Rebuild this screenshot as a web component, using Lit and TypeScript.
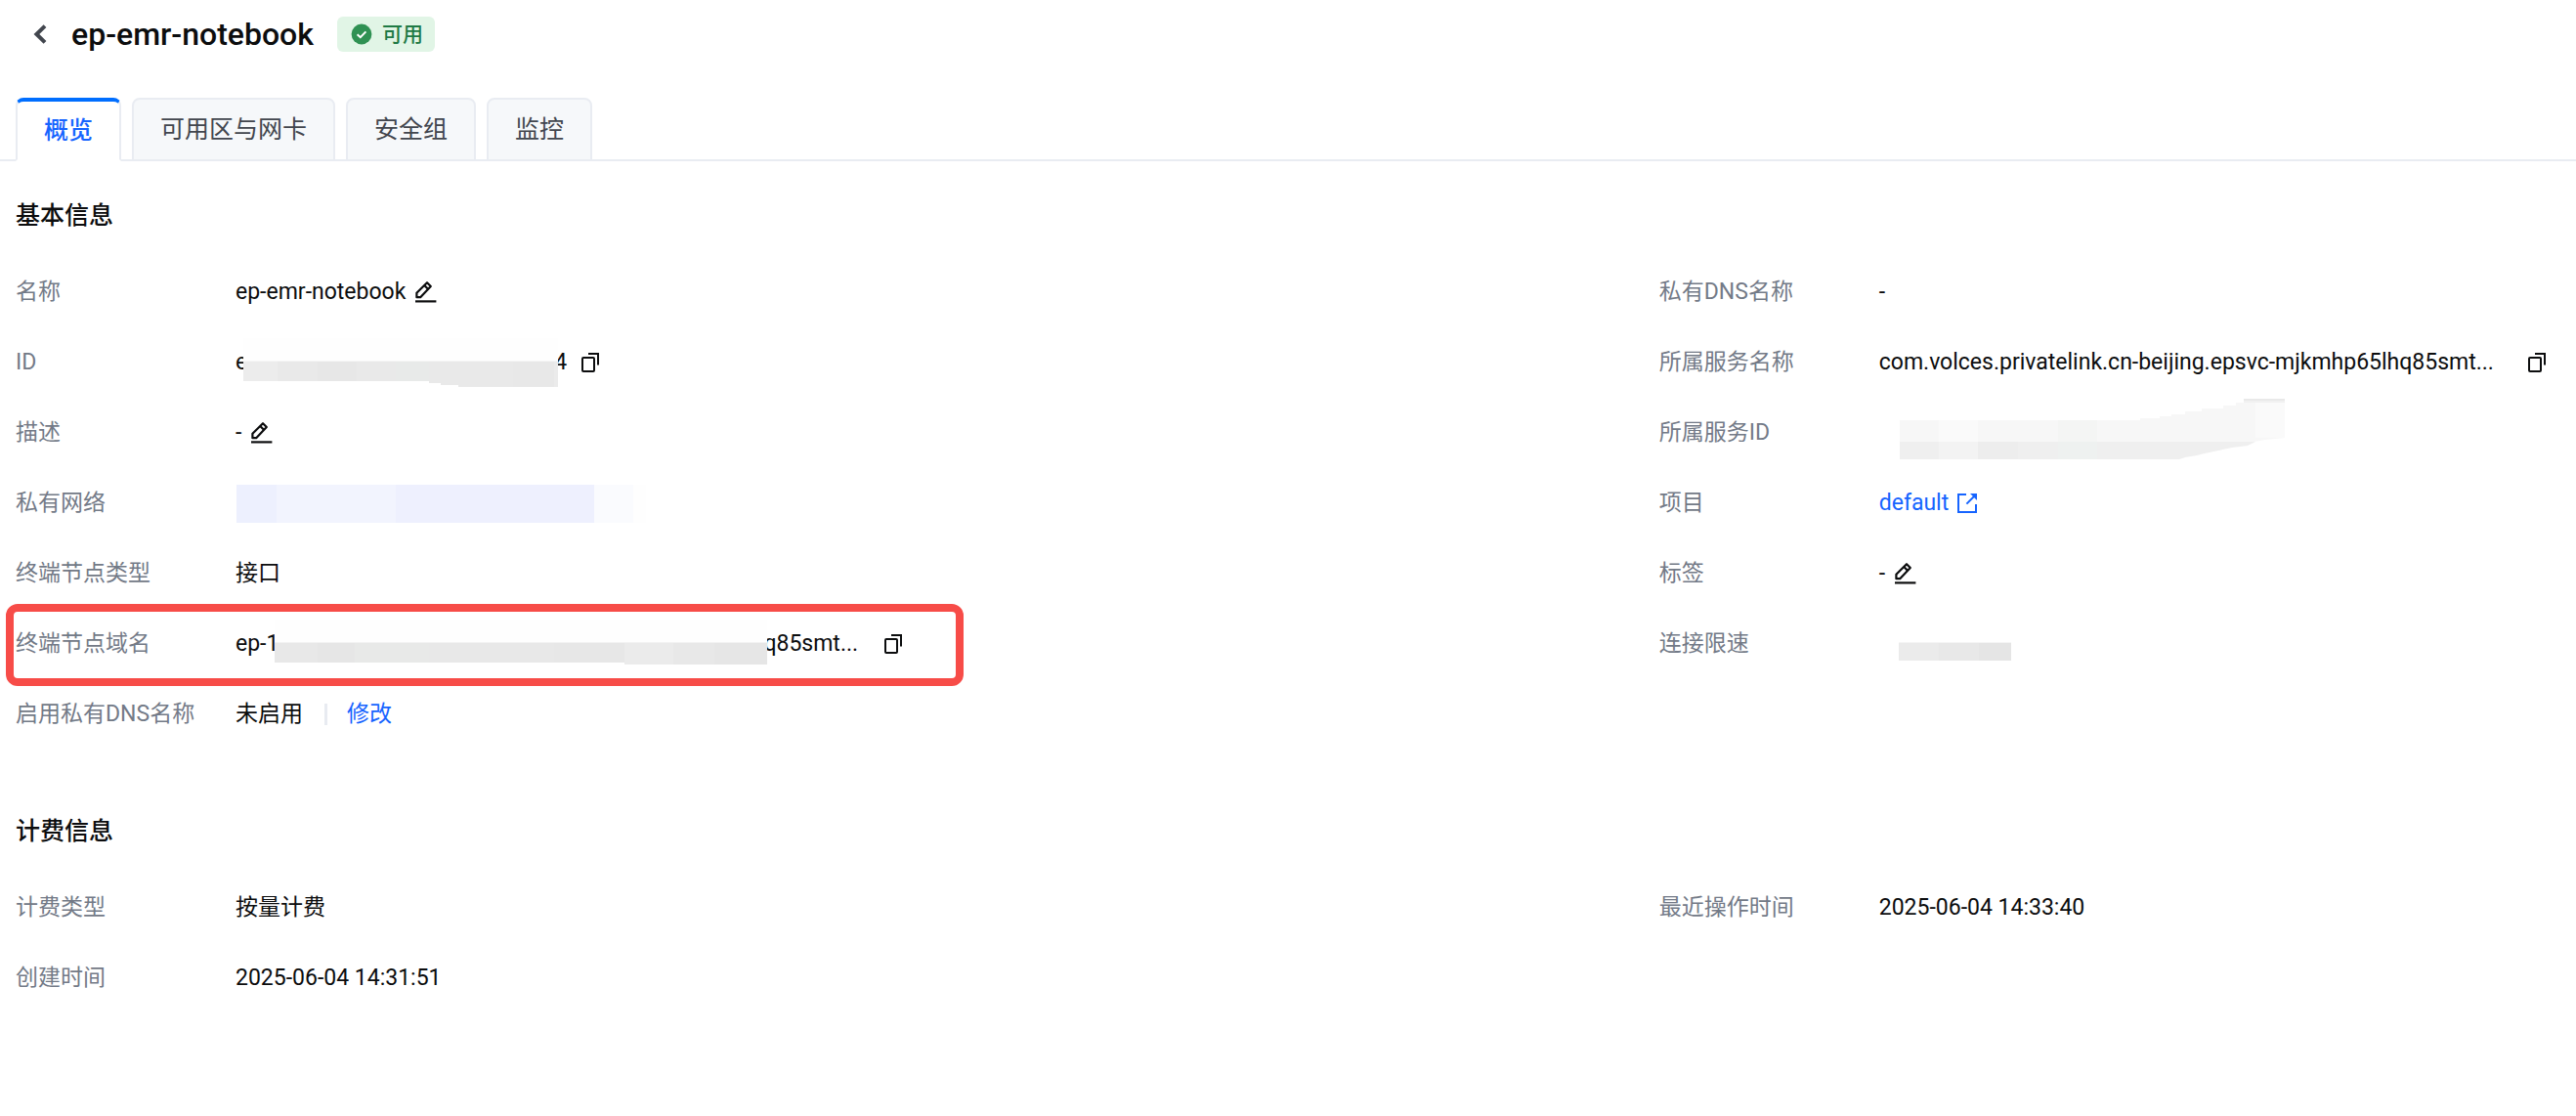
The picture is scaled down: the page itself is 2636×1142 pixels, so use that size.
import { LitElement, html, svg, css, nothing, type TemplateResult } from "lit";
import { customElement, property, state } from "lit/decorators.js";
import { classMap } from "lit/directives/class-map.js";

const editIcon = html`<svg width="22" height="24" viewBox="0 0 22 24" fill="none" stroke="currentColor" stroke-width="2.2" stroke-linejoin="round" aria-hidden="true">
  <path d="M1.4 17.2V12.8L12 2.2L15.8 6L5.2 17.2Z" />
  <path d="M9.2 5L13 8.8" />
  <path d="M0 21.4H21.4" />
</svg>`;

const copyIcon = html`<svg width="20" height="20" viewBox="0 0 20 20" fill="none" stroke="currentColor" stroke-width="2" aria-hidden="true">
  <rect x="2" y="5" width="12" height="14" rx="1" />
  <path d="M8 1H18V12.4" />
</svg>`;

const externalIcon = html`<svg width="22" height="22" viewBox="0 0 22 22" fill="none" stroke="currentColor" stroke-width="2" aria-hidden="true">
  <path d="M10 2H2V20H20V12" />
  <path d="M10.4 11.6L18.4 3.6" />
  <path d="M14 1H21V8Z" fill="currentColor" stroke="none" />
</svg>`;

const backIcon = html`<svg width="14" height="20" viewBox="0 0 14 20" fill="none" stroke="currentColor" stroke-width="4" aria-hidden="true">
  <path d="M12 1.6L3.4 10L12 18.4" />
</svg>`;

const checkIcon = html`<svg width="22" height="22" viewBox="0 0 22 22" fill="none" aria-hidden="true">
  <circle cx="11" cy="11" r="10.4" fill="#2f9153" />
  <path d="M6.6 11.2L9.8 14.2L15.4 8.4" stroke="#fff" stroke-width="2" />
</svg>`;

/** A painted-over stretch of a value; every shape is drawn within a 72px row. */
interface Band {
  points: string;
  fill: string;
}

const mask = (width: number, bands: Band[]) => html`<svg
  class="mask" width=${width} height="72" viewBox="0 1 ${width} 72" aria-hidden="true">
  ${bands.map((b) => svg`<polygon points=${b.points} fill=${b.fill} />`)}
</svg>`;

const box = (x1: number, y1: number, x2: number, y2: number, fill: string): Band => ({
  points: `${x1},${y1} ${x2},${y1} ${x2},${y2} ${x1},${y2}`,
  fill,
});

const idMask = mask(322, [
  box(0, 12, 322, 35, "#fefefe"),
  box(0, 35, 322, 36, "#f6f6f6"),
  box(0, 36, 35, 56, "#ececec"),
  box(35, 36, 76, 56, "#e9e9e9"),
  box(76, 36, 116, 56, "#e7e7e7"),
  box(116, 36, 156, 56, "#e9e9e9"),
  box(156, 36, 190, 56, "#e8eae9"),
  box(190, 36, 202, 58, "#e9e9e9"),
  box(202, 36, 220, 60, "#e9e9e9"),
  box(220, 36, 276, 62, "#e9e9e9"),
  box(276, 36, 318, 62, "#e8e8e8"),
  box(318, 36, 322, 62, "#ebebeb"),
]);

const domainMask = mask(504, [
  box(0, 12, 504, 35, "#fefefe"),
  box(0, 35, 504, 36, "#f2f2f2"),
  box(0, 36, 44, 56, "#e8e8e8"),
  box(44, 36, 82, 56, "#e6e6e6"),
  box(82, 36, 158, 56, "#e8e9e8"),
  box(158, 36, 286, 56, "#e8e8e8"),
  box(286, 36, 358, 56, "#e7e7e7"),
  box(358, 36, 408, 58, "#ebebeb"),
  box(408, 36, 450, 58, "#e8e8e8"),
  box(450, 36, 504, 58, "#e6e6e6"),
]);

const networkMask = mask(420, [
  box(1, 18, 42, 57, "#edf0fe"),
  box(42, 18, 164, 57, "#f2f4fe"),
  box(164, 18, 367, 57, "#eef0fe"),
  box(367, 18, 407, 57, "#fafbfe"),
  box(407, 18, 420, 57, "#fefefe"),
]);

const serviceMask = mask(416, [
  {
    points:
      "21,24 267,24 267,22 287,22 287,20 299,20 299,18 313,18 313,15 330,15 330,12 352,12 352,9 365,9 365,6 373,6 373,2 415,2 415,42 395,44 384,46 21,46",
    fill: "#f7f7f7",
  },
  box(61, 24, 101, 46, "#fafafa"),
  box(183, 24, 223, 46, "#f4f5f4"),
  box(385, 5, 415, 42, "#fafafa"),
  box(373, 2, 415, 4, "#e9e9e9"),
  box(373, 4, 415, 6, "#f1f1f1"),
  {
    points: "21,46 385,46 377,50 361,52 347,55 333,58 325,60 313,62 307,64 21,64",
    fill: "#efefef",
  },
  box(61, 46, 101, 64, "#f3f3f3"),
  box(101, 46, 142, 64, "#ededed"),
  box(183, 46, 223, 64, "#eef1f0"),
]);

const rateMask = mask(136, [
  box(20, 36, 61, 54, "#ebebeb"),
  box(61, 36, 102, 54, "#e8e8e8"),
  box(102, 36, 135, 54, "#e5e5e5"),
  box(20, 35, 135, 36, "#f4f4f4"),
]);

@customElement("info-item")
export class InfoItem extends LitElement {
  @property() label = "";
  @property({ type: Boolean }) marked = false;
  @property({ attribute: false }) value: TemplateResult | string = "";

  static styles = css`
    :host {
      display: block;
    }
    .item {
      position: relative;
      display: flex;
      align-items: center;
      width: fit-content;
      height: 72px;
      margin: 0;
      font-size: 23px;
      line-height: 32px;
      white-space: nowrap;
    }
    .label {
      width: 225px;
      flex: none;
      color: #737a87;
    }
    .value {
      display: flex;
      align-items: center;
      gap: 10px;
      margin: 0;
      color: #0c0d0e;
    }
    .masked {
      display: flex;
      align-items: center;
    }
    .mask {
      position: relative;
      flex: none;
      display: block;
    }
    .masked .mask {
      margin: 0 -4px;
    }
    .short {
      margin-right: 4px;
    }
    .long {
      margin-right: 16px;
    }
    .wide {
      margin-right: 24px;
    }
    .icon {
      display: flex;
      padding: 0;
      border: 0;
      background: none;
      color: inherit;
      cursor: pointer;
    }
    .link {
      display: flex;
      align-items: center;
      gap: 8px;
      color: #1664ff;
      text-decoration: none;
    }
    .divider {
      width: 3px;
      height: 22px;
      margin: 0 10px 0 12px;
      background: #e8ebf1;
    }
    .highlight {
      position: absolute;
      inset: -5px -62px -7px -10px;
      border: 8px solid #f74c48;
      border-radius: 12px;
      pointer-events: none;
    }
  `;

  render() {
    return html`<dl class="item">
      <dt class="label">${this.label}</dt>
      <dd class="value">${this.value}</dd>
      ${this.marked ? html`<div class="highlight"></div>` : nothing}
    </dl>`;
  }
}

const edit = (what: string) =>
  html`<button class="icon" type="button" aria-label="编辑${what}">${editIcon}</button>`;
const copy = (what: string) =>
  html`<button class="icon" type="button" aria-label="复制${what}">${copyIcon}</button>`;

interface Item {
  label: string;
  value: TemplateResult | string;
  marked?: boolean;
}

const basicLeft: Item[] = [
  { label: "名称", value: html`<span>ep-emr-notebook</span>${edit("名称")}` },
  {
    label: "ID",
    value: html`<span class="masked short"><span>e</span>${idMask}<span>4</span></span>${copy("ID")}`,
  },
  { label: "描述", value: html`<span>-</span>${edit("描述")}` },
  { label: "私有网络", value: networkMask },
  { label: "终端节点类型", value: "接口" },
  {
    label: "终端节点域名",
    marked: true,
    value: html`<span class="masked long"><span>ep-1</span>${domainMask}<span>q85smt...</span></span>${copy("终端节点域名")}`,
  },
  {
    label: "启用私有DNS名称",
    value: html`<span>未启用</span><span class="divider"></span><a class="link" href="#dns">修改</a>`,
  },
];

const basicRight: Item[] = [
  { label: "私有DNS名称", value: "-" },
  {
    label: "所属服务名称",
    value: html`<span class="wide">com.volces.privatelink.cn-beijing.epsvc-mjkmhp65lhq85smt...</span>${copy("所属服务名称")}`,
  },
  { label: "所属服务ID", value: serviceMask },
  { label: "项目", value: html`<a class="link" href="#project">default ${externalIcon}</a>` },
  { label: "标签", value: html`<span>-</span>${edit("标签")}` },
  { label: "连接限速", value: rateMask },
];

const billingLeft: Item[] = [
  { label: "计费类型", value: "按量计费" },
  { label: "创建时间", value: "2025-06-04 14:31:51" },
];

const billingRight: Item[] = [{ label: "最近操作时间", value: "2025-06-04 14:33:40" }];

const tabs = ["概览", "可用区与网卡", "安全组", "监控"];

@customElement("app-root")
export class AppRoot extends LitElement {
  @state() private active = 0;

  static styles = css`
    :host {
      display: block;
      min-height: 100vh;
      background: #fff;
      color: #0c0d0e;
      font-family: Roboto, "Noto Sans CJK SC", sans-serif;
    }
    .header {
      display: flex;
      align-items: center;
      padding: 17px 34px 47px;
      height: 36px;
    }
    .back {
      display: flex;
      padding: 0;
      margin-right: 25px;
      border: 0;
      background: none;
      color: #42464e;
      cursor: pointer;
    }
    .title {
      margin: 0 24px 0 0;
      font-size: 32px;
      line-height: 36px;
      font-weight: 500;
    }
    .status {
      display: flex;
      align-items: center;
      gap: 10px;
      height: 36px;
      padding: 0 12px 0 14px;
      border-radius: 6px;
      background: #e1f5e6;
      color: #1f7a45;
      font-size: 21px;
      line-height: 36px;
      font-weight: 500;
    }
    .tabs {
      display: flex;
      gap: 11px;
      padding: 0 16px;
      border-bottom: 2px solid #e9ecf2;
    }
    .tab {
      box-sizing: border-box;
      height: 65px;
      margin: 0 0 -2px;
      padding: 0 27px;
      border: 2px solid #e9ecf2;
      border-radius: 8px 8px 0 0;
      background: #f6f8fa;
      color: #42464e;
      font-family: inherit;
      font-size: 25px;
      line-height: 32px;
      cursor: pointer;
    }
    .tab.active {
      border-top: 4px solid #006eff;
      border-bottom-color: #fff;
      background: #fff;
      color: #1664ff;
      font-weight: 500;
    }
    .panel {
      display: flex;
      flex-direction: column;
      gap: 68px;
      padding: 40px 16px;
    }
    .heading {
      margin: 0 0 26px;
      font-size: 25px;
      line-height: 32px;
      font-weight: 500;
    }
    .columns {
      display: grid;
      grid-template-columns: 31fr 17fr;
    }
  `;

  private column(items: Item[]) {
    return html`<div>
      ${items.map(
        (i) => html`<info-item .label=${i.label} .value=${i.value} .marked=${i.marked ?? false}></info-item>`,
      )}
    </div>`;
  }

  private section(title: string, left: Item[], right: Item[]) {
    return html`<section>
      <h2 class="heading">${title}</h2>
      <div class="columns">${this.column(left)}${this.column(right)}</div>
    </section>`;
  }

  render() {
    return html`
      <header class="header">
        <button class="back" type="button" aria-label="返回">${backIcon}</button>
        <h1 class="title">ep-emr-notebook</h1>
        <span class="status">${checkIcon}可用</span>
      </header>
      <div class="tabs" role="tablist">
        ${tabs.map(
          (t, i) => html`<button
            type="button"
            role="tab"
            aria-selected=${i === this.active ? "true" : "false"}
            class=${classMap({ tab: true, active: i === this.active })}
            @click=${() => (this.active = i)}
          >${t}</button>`,
        )}
      </div>
      <main class="panel">
        ${this.section("基本信息", basicLeft, basicRight)}
        ${this.section("计费信息", billingLeft, billingRight)}
      </main>
    `;
  }
}
